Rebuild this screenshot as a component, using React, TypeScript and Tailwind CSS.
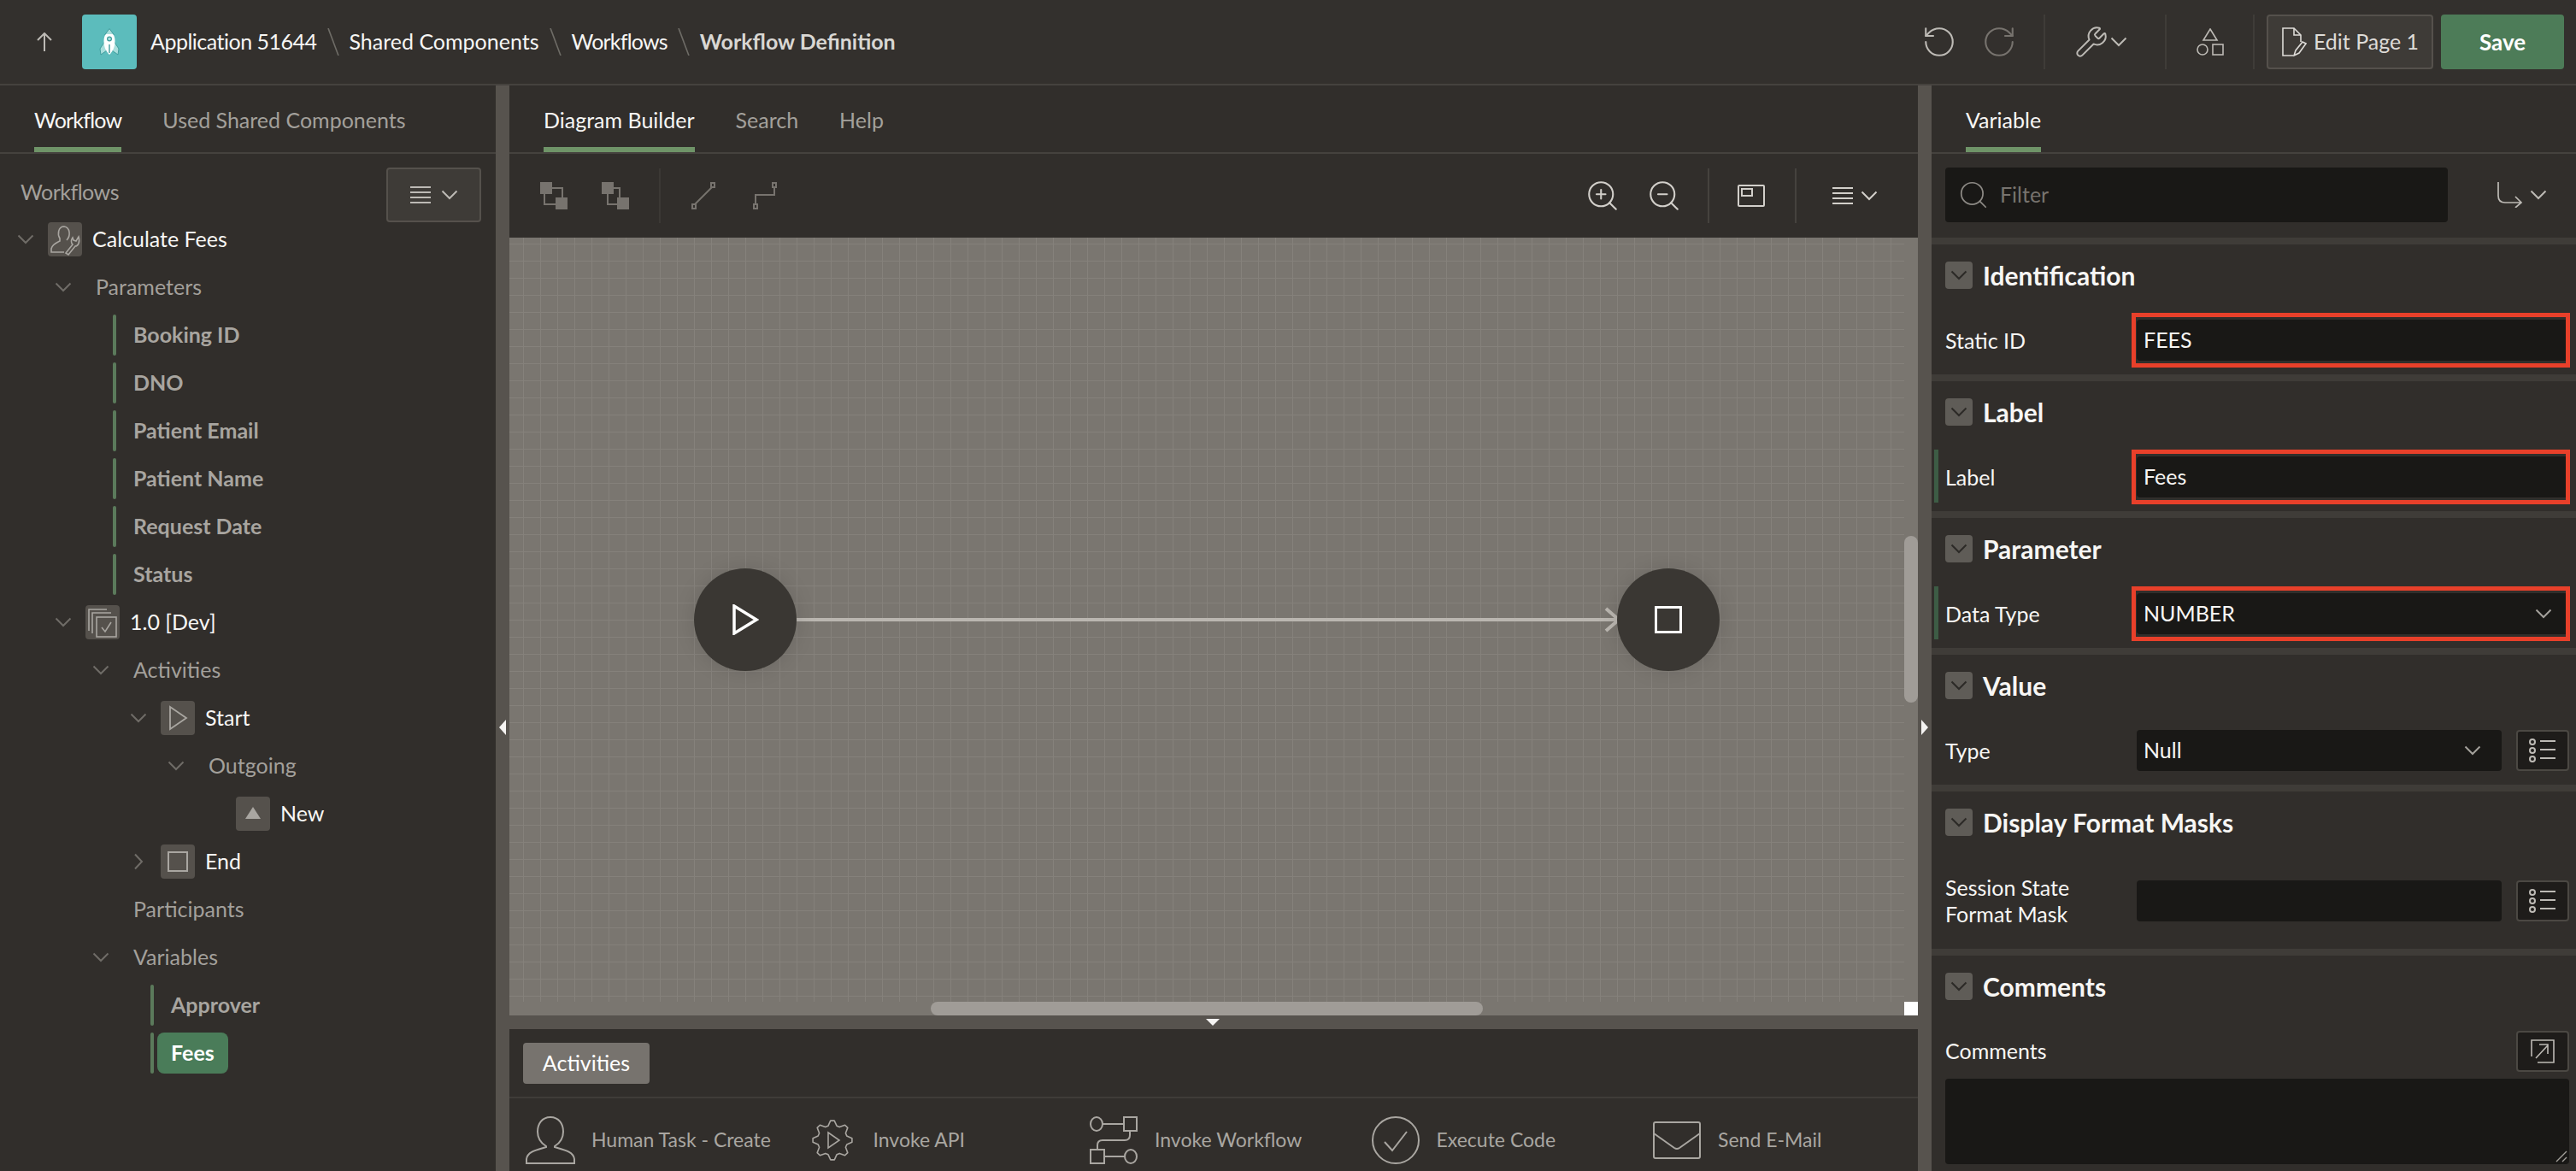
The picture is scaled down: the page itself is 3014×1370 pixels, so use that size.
import { RotateCcw, RotateCw, Search, Wrench, ZoomIn, ZoomOut } from "lucide-react";
import type { ReactNode } from "react";

// Chevrons are drawn by hand so the thin V of the original comes through.
function Chevron({ className = "", right = false }: { className?: string; right?: boolean }) {
  return (
    <svg viewBox="0 0 20 20" className={`w-5 h-5 ${className}`} fill="none" stroke="currentColor" strokeWidth="2">
      {right ? <path d="M6 1.5 L14 10 L6 18.5" /> : <path d="M1.5 5.5 L10 14 L18.5 5.5" />}
    </svg>
  );
}

function MenuLines({ className = "" }: { className?: string }) {
  return (
    <svg viewBox="0 0 24 22" className={`w-6 h-[22px] ${className}`} stroke="currentColor" strokeWidth="2">
      <path d="M0 2 H24 M0 8 H24 M0 14 H24 M0 20 H24" />
    </svg>
  );
}

function Divider() {
  return <div className="w-0.5 h-16 bg-[#3f3c38]" />;
}

function ListButton() {
  return (
    <div className="w-[62px] h-12 rounded border-2 border-[#4b4843] bg-[#1e1c1a] flex items-center justify-center text-[#bdbab5]">
      <svg viewBox="0 0 32 30" className="w-8 h-[30px]" fill="none" stroke="currentColor" strokeWidth="2">
        <circle cx="4" cy="5" r="3" />
        <circle cx="4" cy="15" r="3" />
        <circle cx="4" cy="25" r="3" />
        <path d="M13 4 H31 M13 14 H31 M13 24 H31" />
      </svg>
    </div>
  );
}

/* ---------- tree ---------- */

function NodeIcon({ kind }: { kind: string }) {
  return (
    <div className="w-10 h-10 rounded bg-[#55514c] flex items-center justify-center text-[#a9a6a1] shrink-0">
      {kind === "flow" && (
        <svg viewBox="0 0 40 40" className="w-10 h-10" fill="none" stroke="currentColor" strokeWidth="1.6">
          <path d="M22 21 C27 16 26 6 19 5 C12 5 11 14 14 19 L14 22 C10 24 5 26 4 31 V35 H19" />
          <path d="M36 17 L33 22 L30 21 L29 18 C27 21 27 24 29 26 L21 36 L24 38 L32 28 C35 28 38 24 36 17 Z" />
        </svg>
      )}
      {kind === "version" && (
        <svg viewBox="0 0 40 40" className="w-10 h-10" fill="none" stroke="currentColor" strokeWidth="1.6">
          <path d="M4 30 V5 H25" />
          <path d="M8 33 V9 H30" />
          <rect x="13" y="14" width="23" height="23" />
          <path d="M19 26 L23 31 L30 20" />
        </svg>
      )}
      {kind === "start" && (
        <svg viewBox="0 0 40 40" className="w-10 h-10" fill="none" stroke="currentColor" strokeWidth="1.8">
          <path d="M11 7 L30 20 L11 33 Z" />
        </svg>
      )}
      {kind === "end" && <div className="w-6 h-6 border-2 border-[#a9a6a1]" />}
      {kind === "new" && (
        <svg viewBox="0 0 40 40" className="w-10 h-10" fill="currentColor">
          <path d="M20 12 L29 26 H11 Z" />
        </svg>
      )}
    </div>
  );
}

type Row = {
  level: number;
  label: string;
  icon?: string;
  chevron?: "down" | "right";
  leaf?: boolean;
  selected?: boolean;
};

const TREE: Row[] = [
  { level: 0, label: "Calculate Fees", icon: "flow", chevron: "down" },
  { level: 1, label: "Parameters", chevron: "down" },
  { level: 2, label: "Booking ID", leaf: true },
  { level: 2, label: "DNO", leaf: true },
  { level: 2, label: "Patient Email", leaf: true },
  { level: 2, label: "Patient Name", leaf: true },
  { level: 2, label: "Request Date", leaf: true },
  { level: 2, label: "Status", leaf: true },
  { level: 1, label: "1.0 [Dev]", icon: "version", chevron: "down" },
  { level: 2, label: "Activities", chevron: "down" },
  { level: 3, label: "Start", icon: "start", chevron: "down" },
  { level: 4, label: "Outgoing", chevron: "down" },
  { level: 5, label: "New", icon: "new" },
  { level: 3, label: "End", icon: "end", chevron: "right" },
  { level: 2, label: "Participants" },
  { level: 2, label: "Variables", chevron: "down" },
  { level: 3, label: "Approver", leaf: true },
  { level: 3, label: "Fees", leaf: true, selected: true },
];

function TreeRow({ row }: { row: Row }) {
  const indent = row.level * 44;
  if (row.leaf) {
    return (
      <div className="h-14 flex items-center" style={{ paddingLeft: indent + 44 }}>
        <div className="w-1 h-12 rounded-sm bg-[#5b7a5b]" />
        <div
          className={`ml-1 h-12 px-4 rounded-lg flex items-center text-[25px] font-bold ${
            row.selected ? "bg-[#4a7c59] text-white" : "text-[#a8a5a0]"
          }`}
        >
          {row.label}
        </div>
      </div>
    );
  }
  return (
    <div className="h-14 flex items-center" style={{ paddingLeft: indent }}>
      <div className="w-14 pl-5 shrink-0 text-[#6f6c67]">
        {row.chevron && <Chevron right={row.chevron === "right"} />}
      </div>
      {row.icon && <NodeIcon kind={row.icon} />}
      <span className={`ml-3 text-[25px] ${row.icon ? "text-[#f7f6f4]" : "text-[#a3a09b]"}`}>{row.label}</span>
    </div>
  );
}

/* ---------- property panel ---------- */

function Section({ title, children, className = "mt-9 pb-4" }: { title: string; children: ReactNode; className?: string }) {
  return (
    <section className="border-b-8 border-[#3f3c38] pt-5 pl-4 pr-2">
      <div className="h-8 flex items-center gap-3">
        <div className="w-8 h-8 rounded bg-[#5f5c57] flex items-center justify-center text-[#2c2a27]">
          <Chevron />
        </div>
        <h2 className="text-[30px] font-bold text-[#f7f6f4]">{title}</h2>
      </div>
      <div className={className}>{children}</div>
    </section>
  );
}

function Field({
  label,
  value,
  select,
  flagged,
  marked,
  narrow,
}: {
  label: ReactNode;
  value?: string;
  select?: boolean;
  flagged?: boolean;
  marked?: boolean;
  narrow?: boolean;
}) {
  return (
    <div className="relative flex items-center">
      {flagged && <div className="absolute -left-[13px] -top-2 w-[5px] h-[62px] bg-[#3d5c45]" />}
      <div className="w-[224px] shrink-0 text-[25px] leading-[31px] text-[#f7f6f4]">{label}</div>
      <div className={`relative h-12 rounded bg-[#191816] flex items-center px-2 text-[25px] text-[#f7f6f4] ${narrow ? "w-[427px]" : "w-[506px]"}`}>
        {value}
        {select && <Chevron className={`ml-auto text-[#a3a09b] ${narrow ? "mr-4" : "mr-3"}`} />}
        {marked && <div className="absolute -left-1.5 -right-px -top-2 -bottom-2 border-[5px] border-[#e8402a]" />}
      </div>
      {narrow && (
        <div className="ml-[17px]">
          <ListButton />
        </div>
      )}
    </div>
  );
}

/* ---------- palette ---------- */

function Gear() {
  const pts: string[] = [];
  for (let i = 0; i < 32; i++) {
    const a = (i / 32) * Math.PI * 2;
    const r = i % 4 < 2 ? 23 : 17.5;
    pts.push(`${(24 + r * Math.sin(a - 0.1)).toFixed(1)},${(24 - r * Math.cos(a - 0.1)).toFixed(1)}`);
  }
  return (
    <svg viewBox="0 0 48 48" className="w-12 h-12" fill="none" stroke="currentColor" strokeWidth="1.6">
      <polygon points={pts.join(" ")} strokeLinejoin="round" />
      <path d="M19 15 L32 24 L19 33 Z" />
    </svg>
  );
}

const PALETTE: { label: string; icon: ReactNode }[] = [
  {
    label: "Human Task - Create",
    icon: (
      <svg viewBox="0 0 58 56" className="w-[58px] h-14" fill="none" stroke="currentColor" strokeWidth="2">
        <path d="M29 1 C19 1 14 9 14 18 C14 26 19 32 24 35 L24 36 C14 39 2 41 1 50 V55 H57 V50 C56 41 44 39 34 36 L34 35 C39 32 44 26 44 18 C44 9 39 1 29 1 Z" />
      </svg>
    ),
  },
  { label: "Invoke API", icon: <Gear /> },
  {
    label: "Invoke Workflow",
    icon: (
      <svg viewBox="0 0 56 56" className="w-14 h-14" fill="none" stroke="currentColor" strokeWidth="2">
        <ellipse cx="8" cy="9" rx="7" ry="8" />
        <rect x="40" y="1" width="15" height="16" />
        <path d="M15 9 H40 M47 17 V22 Q47 28 41 28 H15 Q9 28 9 34 V38" />
        <rect x="1" y="39" width="16" height="16" />
        <ellipse cx="48" cy="47" rx="7" ry="8" />
        <path d="M17 47 H41" />
      </svg>
    ),
  },
  {
    label: "Execute Code",
    icon: (
      <svg viewBox="0 0 56 56" className="w-14 h-14" fill="none" stroke="currentColor" strokeWidth="2">
        <circle cx="28" cy="28" r="27" />
        <path d="M15 30 L24 40 L41 18" />
      </svg>
    ),
  },
  {
    label: "Send E-Mail",
    icon: (
      <svg viewBox="0 0 56 44" className="w-14 h-11" fill="none" stroke="currentColor" strokeWidth="2">
        <rect x="1" y="1" width="54" height="42" rx="2" />
        <path d="M1 14 L25 31 Q28 33 31 31 L55 14" />
      </svg>
    ),
  },
];

/* ---------- shared bits ---------- */

function Tab({ label, active, className = "" }: { label: string; active?: boolean; className?: string }) {
  return (
    <div className={`h-[78px] pt-6 text-[25px] leading-8 border-b-[6px] ${className} ${active ? "border-[#6f9468] text-[#f7f6f4]" : "border-transparent text-[#a3a09b]"}`}>
      {label}
    </div>
  );
}

function Slash() {
  return (
    <svg viewBox="0 0 14 32" className="w-3.5 h-8 text-[#6f6c67]" stroke="currentColor" strokeWidth="1.6">
      <path d="M1 0 L13 32" />
    </svg>
  );
}

export default function App() {
  return (
    <div className="w-[3014px] h-[1370px] overflow-hidden flex flex-col bg-[#312e2b] font-['Lato','Noto_Sans',sans-serif]">
      {/* Top bar */}
      <header className="h-[100px] shrink-0 flex items-center pl-[42px] pr-3.5 bg-[#33302d] border-b-2 border-[#45423e]">
        <svg viewBox="0 0 20 22" className="w-5 h-[22px] text-[#bdbab5]" fill="none" stroke="currentColor" strokeWidth="2">
          <path d="M10 22 V2 M2 9 L10 1 L18 9" />
        </svg>
        <div className="ml-[34px] w-16 h-16 rounded bg-[#5cbcbc] flex items-center justify-center">
          <svg viewBox="0 0 24 32" className="w-6 h-8" strokeLinejoin="round">
            <path d="M7 15 L1 24 L2 31 L9 26 Z M17 15 L23 24 L22 31 L15 26 Z" fill="#a9dedc" stroke="#3f9c9c" strokeWidth="1" />
            <path d="M12 0.5 L6.5 8 H17.5 Z" fill="#a9dedc" stroke="#3f9c9c" strokeWidth="1" />
            <path d="M12 31 C8 27 5.5 22 5.5 15 C5.5 11 6.5 8.5 8 7 H16 C17.5 8.5 18.5 11 18.5 15 C18.5 22 16 27 12 31 Z" fill="#ffffff" />
            <circle cx="12" cy="12.5" r="2.4" fill="#a9dedc" stroke="#3f9c9c" strokeWidth="1.2" />
            <path d="M12 19 V29" stroke="#3f9c9c" strokeWidth="1.4" />
          </svg>
        </div>
        <nav className="ml-4 flex items-center gap-3 text-[25px] text-[#f7f6f4]">
          <span className="tracking-[-0.5px]">Application 51644</span>
          <Slash />
          <span>Shared Components</span>
          <Slash />
          <span className="tracking-[-0.8px]">Workflows</span>
          <Slash />
          <span className="font-bold text-[#d9d7d3]">Workflow Definition</span>
        </nav>

        <div className="ml-auto flex items-center">
          <RotateCcw className="w-[42px] h-[42px] text-[#bdbab5]" strokeWidth={1.2} />
          <RotateCw className="ml-7 w-[42px] h-[42px] text-[#77736e]" strokeWidth={1.2} />
          <div className="ml-[31px] mr-[34px]">
            <Divider />
          </div>
          <Wrench className="w-10 h-10 text-[#bdbab5]" strokeWidth={1.2} />
          <Chevron className="ml-0.5 text-[#bdbab5]" />
          <div className="ml-11 mr-[35px]">
            <Divider />
          </div>
          <svg viewBox="0 0 32 32" className="w-8 h-8 text-[#bdbab5]" fill="none" stroke="currentColor" strokeWidth="1.6">
            <path d="M16 1 L24 14 H8 Z" />
            <ellipse cx="7" cy="25" rx="6" ry="6" />
            <rect x="19" y="19" width="12" height="12" />
          </svg>
          <div className="ml-[34px] mr-3.5">
            <Divider />
          </div>
          <button className="w-[195px] h-16 rounded border-2 border-[#55514c] bg-[#3e3b37] flex items-center justify-center gap-2 text-[25px] text-[#dedcd8]">
            <svg viewBox="0 0 30 34" className="w-[30px] h-[34px]" fill="none" stroke="currentColor" strokeWidth="1.6">
              <path d="M14 33 H2 V1 H15 L23 9 V17" />
              <path d="M15 1 V9 H23" />
              <path d="M15 33 L17 27 L25 17 L29 19 L21 30 Z" />
            </svg>
            Edit Page 1
          </button>
          <button className="ml-[9px] w-[144px] h-16 rounded bg-[#4d7c58] text-[26px] font-bold text-white">Save</button>
        </div>
      </header>

      <div className="flex-1 flex min-h-0">
        {/* Left tree panel */}
        <aside className="w-[580px] shrink-0">
          <div className="h-20 pl-10 flex gap-12 border-b-2 border-[#45423e]">
            <Tab label="Workflow" active className="tracking-[-0.8px]" />
            <Tab label="Used Shared Components" />
          </div>
          <div className="h-[72px] pt-4 pl-6 pr-[17px] flex items-start justify-between">
            <span className="text-[25px] leading-[56px] text-[#a3a09b] tracking-[-0.5px]">Workflows</span>
            <button className="relative z-10 w-[111px] h-16 rounded border-2 border-[#55514c] bg-[#3e3b37] flex items-center justify-center gap-3 text-[#bdbab5]">
              <MenuLines />
              <Chevron />
            </button>
          </div>
          {TREE.map((row) => (
            <TreeRow key={row.label} row={row} />
          ))}
        </aside>

        <div className="relative w-4 shrink-0 bg-[#57534e]">
          <div className="absolute left-1 top-[742px] border-y-[9px] border-r-[8px] border-y-transparent border-r-[#f5f4f2]" />
        </div>

        {/* Center column */}
        <main className="w-[1648px] shrink-0 flex flex-col">
          <div className="h-20 pl-10 flex gap-12 border-b-2 border-[#45423e]">
            <Tab label="Diagram Builder" active />
            <Tab label="Search" />
            <Tab label="Help" />
          </div>

          {/* Diagram toolbar */}
          <div className="h-[98px] shrink-0 flex items-center pl-9 pr-[47px]">
            <svg viewBox="0 0 32 32" className="w-8 h-8 text-[#77736e]">
              <rect x="0" y="0" width="14" height="14" fill="currentColor" />
              <rect x="18" y="18" width="14" height="14" fill="currentColor" />
              <rect x="5" y="7" width="21" height="19" fill="none" stroke="currentColor" strokeWidth="2" />
            </svg>
            <svg viewBox="0 0 32 32" className="ml-10 w-8 h-8 text-[#77736e]">
              <rect x="0" y="0" width="14" height="14" fill="currentColor" />
              <rect x="18" y="18" width="14" height="14" fill="currentColor" />
              <path d="M14 7 H21 V18 M7 14 V26 H18" fill="none" stroke="currentColor" strokeWidth="2" />
            </svg>
            <div className="ml-[35px] w-0.5 h-16 bg-[#3b3834]" />
            <svg viewBox="0 0 28 32" className="ml-9 w-7 h-8 text-[#77736e]" fill="none" stroke="currentColor" strokeWidth="2">
              <rect x="23" y="1" width="4" height="5" />
              <rect x="1" y="26" width="4" height="5" />
              <path d="M24 6 L4 26" />
            </svg>
            <svg viewBox="0 0 28 32" className="ml-11 w-7 h-8 text-[#77736e]" fill="none" stroke="currentColor" strokeWidth="2">
              <rect x="23" y="1" width="4" height="5" />
              <rect x="1" y="26" width="4" height="5" />
              <path d="M25 6 V15 H3 V26" />
            </svg>
            <div className="ml-auto flex items-center text-[#d2cfca]">
              <ZoomIn className="w-[42px] h-[42px]" strokeWidth={1.2} />
              <ZoomOut className="ml-[30px] w-[42px] h-[42px]" strokeWidth={1.2} />
              <div className="ml-[30px] w-0.5 h-16 bg-[#45423e]" />
              <svg viewBox="0 0 32 26" className="ml-[33px] w-8 h-[26px]" fill="none" stroke="currentColor" strokeWidth="2">
                <rect x="1" y="1" width="30" height="24" rx="1" />
                <rect x="5" y="5" width="12" height="8" />
              </svg>
              <div className="ml-[35px] w-0.5 h-16 bg-[#45423e]" />
              <MenuLines className="ml-[42px]" />
              <Chevron className="ml-[9px]" />
            </div>
          </div>

          {/* Canvas: nodes sit at their own place on the diagram */}
          <div className="relative h-[910px] shrink-0 bg-[#7a7670] overflow-hidden">
            <div className="absolute left-0 top-0 right-4 bottom-4 bg-[linear-gradient(#85817b_1px,transparent_1px),linear-gradient(90deg,#85817b_1px,transparent_1px)] bg-[size:20px_20px] bg-[position:16px_7px]" />
            <svg className="absolute left-0 top-0 w-[1648px] h-[910px]" fill="none" stroke="#bab6b0" strokeWidth="4">
              <path d="M336 447 H1296" />
              <path d="M1283 434 L1298 447 L1283 460" />
            </svg>
            <div className="absolute left-[216px] top-[387px] w-[120px] h-[120px] rounded-full bg-[#3a3733] shadow-[0_0_24px_rgba(0,0,0,0.12)] flex items-center justify-center">
              <svg viewBox="0 0 32 36" className="w-8 h-9" fill="none" stroke="#ffffff" strokeWidth="3.5">
                <path d="M3 2 L29 18 L3 34 Z" />
              </svg>
            </div>
            <div className="absolute left-[1296px] top-[387px] w-[120px] h-[120px] rounded-full bg-[#3a3733] shadow-[0_0_24px_rgba(0,0,0,0.12)] flex items-center justify-center">
              <div className="w-8 h-8 border-[3px] border-white" />
            </div>
            <div className="absolute left-[1632px] top-[349px] w-4 h-[195px] rounded-full bg-[#a09c97]" />
            <div className="absolute left-[493px] bottom-0 w-[646px] h-4 rounded-full bg-[#a09c97]" />
            <div className="absolute right-0 bottom-0 w-4 h-4 bg-white" />
          </div>

          <div className="relative h-4 shrink-0 bg-[#57534e]">
            <div className="absolute left-[815px] top-1 border-x-[8px] border-t-[8px] border-x-transparent border-t-[#f5f4f2]" />
          </div>

          <div className="h-[81px] shrink-0 pl-4 pt-4 border-b-2 border-[#3f3c38]">
            <div className="w-[148px] h-12 rounded bg-[#77736e] flex items-center justify-center text-[25px] text-white">Activities</div>
          </div>

          <div className="flex-1 flex items-center pl-4 pt-3 text-[#a9a6a1]">
            {PALETTE.map((item) => (
              <div key={item.label} className="w-[329.5px] shrink-0 flex items-center">
                <div className="w-16 flex justify-center">{item.icon}</div>
                <span className="ml-4 text-[23px]">{item.label}</span>
              </div>
            ))}
          </div>
        </main>

        <div className="relative w-4 shrink-0 bg-[#57534e]">
          <div className="absolute left-1 top-[742px] border-y-[9px] border-l-[8px] border-y-transparent border-l-[#f5f4f2]" />
        </div>

        {/* Right property panel */}
        <aside className="flex-1 min-w-0 flex flex-col">
          <div className="h-20 pl-10 flex border-b-2 border-[#45423e]">
            <Tab label="Variable" active />
          </div>
          <div className="h-[106px] shrink-0 flex items-center pl-4 pb-0.5 border-b-8 border-[#3f3c38]">
            <div className="w-[588px] h-16 rounded bg-[#191816] flex items-center pl-3.5 gap-3 text-[#8d8a85]">
              <Search className="w-[38px] h-[38px]" strokeWidth={1.1} />
              <span className="text-[25px] text-[#77736e]">Filter</span>
            </div>
            <svg viewBox="0 0 30 30" className="ml-[58px] w-[30px] h-[30px] text-[#bdbab5]" fill="none" stroke="currentColor" strokeWidth="1.7">
              <path d="M1 0 V16 Q1 24 9 24 H28 M21 17 L28 24 L21 30" />
            </svg>
            <Chevron className="ml-2 text-[#bdbab5]" />
          </div>

          <Section title="Identification">
            <Field label="Static ID" value="FEES" marked />
          </Section>
          <Section title="Label">
            <Field label="Label" value="Fees" marked flagged />
          </Section>
          <Section title="Parameter">
            <Field label="Data Type" value="NUMBER" select marked flagged />
          </Section>
          <Section title="Value">
            <Field label="Type" value="Null" select narrow />
          </Section>
          <Section title="Display Format Masks" className="mt-11 pb-6">
            <div className="h-16 flex items-center">
              <Field label={<>Session State<br />Format Mask</>} narrow />
            </div>
          </Section>

          {/* Comments runs to the page bottom and has no separator below */}
          <section className="flex-1 pt-5 pl-4 pr-2">
            <div className="h-8 flex items-center gap-3">
              <div className="w-8 h-8 rounded bg-[#5f5c57] flex items-center justify-center text-[#2c2a27]">
                <Chevron />
              </div>
              <h2 className="text-[30px] font-bold text-[#f7f6f4]">Comments</h2>
            </div>
            <div className="mt-9 h-12 flex items-center justify-between">
              <span className="text-[25px] text-[#f7f6f4]">Comments</span>
              <div className="w-[62px] h-12 rounded border-2 border-[#4b4843] bg-[#1e1c1a] flex items-center justify-center text-[#bdbab5]">
                <svg viewBox="0 0 28 28" className="w-7 h-7" fill="none" stroke="currentColor" strokeWidth="1.6">
                  <path d="M1 20 V1 H27 V27 H8" />
                  <path d="M6 22 L20 7 M10 6 H20 V17" />
                </svg>
              </div>
            </div>
            <div className="relative mt-2 h-[100px] rounded bg-[#191816]">
              <svg viewBox="0 0 14 14" className="absolute right-0.5 bottom-0.5 w-3.5 h-3.5 text-[#a3a09b]" stroke="currentColor" strokeWidth="1.4">
                <path d="M1 13 L13 1 M8 13 L13 8" />
              </svg>
            </div>
          </section>
        </aside>
      </div>
    </div>
  );
}
